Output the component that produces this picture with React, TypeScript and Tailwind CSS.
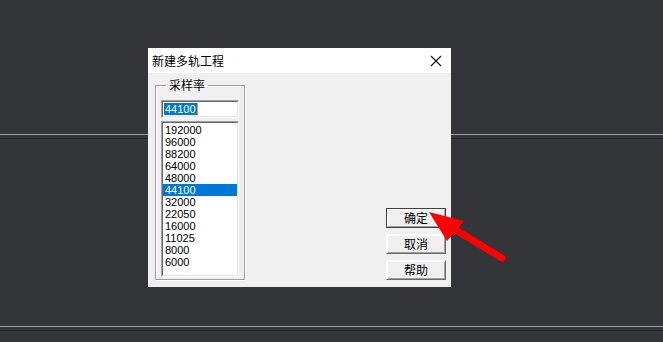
import React from "react";

const RATES = ["192000", "96000", "88200", "64000", "48000", "44100", "32000", "22050", "16000", "11025", "8000", "6000"];
const SELECTED = "44100";

const CJK = "font-['Noto_Sans_CJK_SC',sans-serif]";
const LATIN = "font-['Liberation_Sans','Noto_Sans_CJK_SC',sans-serif]";

function Sunken({ className, children }: { className?: string; children?: React.ReactNode }) {
    return (
        <div
            className={`bg-white border border-t-[#a0a0a0] border-l-[#a0a0a0] border-b-[#fff] border-r-[#fff] ${className ?? ""}`}
        >
            <div className="h-full border border-t-[#696969] border-l-[#696969] border-b-[#e3e3e3] border-r-[#e3e3e3]">
                {children}
            </div>
        </div>
    );
}

function Button({ label, isDefault }: { label: string; isDefault?: boolean }) {
    return (
        <button
            className={`w-[60px] h-[20px] bg-[#f0f0f0] ${CJK} text-[12px] leading-none text-black border ${
                isDefault ? "border-[#404040]" : "border-t-[#fff] border-l-[#fff] border-b-[#696969] border-r-[#696969]"
            } shadow-[inset_1px_1px_0_#fff,inset_-1px_-1px_0_#a0a0a0] flex items-center justify-center`}
        >
            {label}
        </button>
    );
}

function Dialog() {
    return (
        <div className="absolute left-[148px] top-[48px] w-[303px] h-[239px] bg-[#f0f0f0] flex flex-col">
            {/* title bar */}
            <div className="h-[25px] bg-white flex items-center justify-between pl-[4px] pr-[8px] shrink-0">
                <span className={`${CJK} text-[12px] leading-none text-black`}>新建多轨工程</span>
                <svg width="12" height="12" viewBox="0 0 12 12" className="mr-[1px]">
                    <path d="M1 1 L11 11 M11 1 L1 11" stroke="#111" strokeWidth="1.1" />
                </svg>
            </div>

            <div className="flex-1 flex justify-between pl-[7px] pr-[5px] pt-[4px] pb-[7px]">
                {/* sample rate group */}
                <fieldset className="w-[90px] h-[203px] border border-[#a0a0a0] shadow-[inset_1px_1px_0_#fff,1px_1px_0_#fff] px-[5px] flex flex-col">
                    <legend className={`${CJK} text-[12px] leading-[16px] text-black ml-[5px] px-[3px]`}>采样率</legend>
                    <Sunken className="w-[78px] h-[18px] mt-[7px]">
                        <div className={`${LATIN} text-[11px] leading-[12px] flex items-center h-full pl-[1px]`}>
                            <span className="bg-[#0078d7] text-white px-[1px]">44100</span>
                            <span className="w-[1px] h-[12px] bg-[#ff8c00]" />
                        </div>
                    </Sunken>
                    <Sunken className="w-[78px] h-[156px] mt-[3px]">
                        <ul className={`${LATIN} text-[11px] leading-[12px] text-black pt-[1px]`}>
                            {RATES.map((r) => (
                                <li
                                    key={r}
                                    className={`h-[12px] pl-[2px] ${r === SELECTED ? "bg-[#0078d7] text-white" : ""}`}
                                >
                                    {r}
                                </li>
                            ))}
                        </ul>
                    </Sunken>
                </fieldset>

                {/* buttons */}
                <div className="flex flex-col justify-end gap-[6px] pb-[0px]">
                    <Button label="确定" isDefault />
                    <Button label="取消" />
                    <Button label="帮助" />
                </div>
            </div>
        </div>
    );
}

function Arrow() {
    return (
        <svg className="absolute left-0 top-0 pointer-events-none" width="663" height="342">
            <line x1="454" y1="229" x2="502" y2="258" stroke="#ff0000" strokeWidth="7" strokeLinecap="round" />
            <polygon points="429,212 464,221 447,241" fill="#ff0000" />
        </svg>
    );
}

export default function App() {
    return (
        <div className="relative w-[663px] h-[342px] bg-[#333539] overflow-hidden">
            <div className="flex flex-col pt-[134px]">
                <div className="h-[1px] bg-[#9c9da2]" />
                <div className="h-[1px] mt-[3px] bg-[#24252a]" />
                <div className="h-[1px] mt-[187px] bg-[#9c9da2]" />
                <div className="h-[1px] mt-[3px] bg-[#24252a]" />
            </div>
            <Dialog />
            <Arrow />
        </div>
    );
}
